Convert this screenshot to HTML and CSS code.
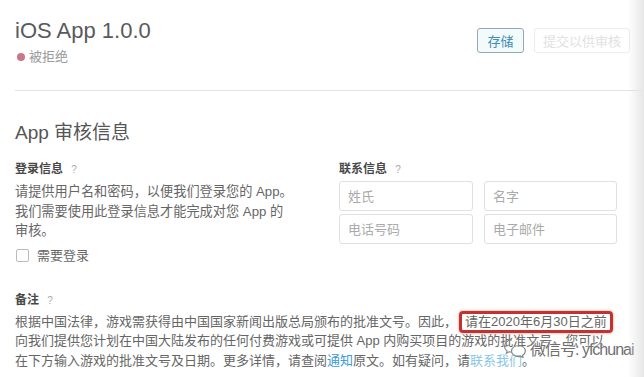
FILE: index.html
```html
<!DOCTYPE html>
<html>
  <head>
    <title>iOS App 1.0.0</title>
    <link rel="stylesheet" href="styles.css">
  </head>
  <body>
    <div class="page">
      <header class="head">
        <div class="head-info">
          <h1 class="title">iOS App 1.0.0</h1>
          <div class="status"><span class="dot"></span>被拒绝</div>
        </div>
        <div class="actions">
          <button class="btn btn-save">存储</button>
          <button class="btn btn-submit" disabled>提交以供审核</button>
        </div>
      </header>

      <section class="review">
        <h2 class="review-title">App 审核信息</h2>

        <div class="cols">
          <div class="login">
            <div class="label">登录信息 <span class="help">?</span></div>
            <p class="desc">请提供用户名和密码，以便我们登录您的 App。<br>我们需要使用此登录信息才能完成对您 App 的<br>审核。</p>
            <label class="check"><span class="box"></span>需要登录</label>
          </div>

          <div class="contact">
            <div class="label">联系信息 <span class="help">?</span></div>
            <div class="fields">
              <input class="field" placeholder="姓氏">
              <input class="field" placeholder="名字">
              <input class="field" placeholder="电话号码">
              <input class="field" placeholder="电子邮件">
            </div>
          </div>
        </div>

        <div class="notes">
          <div class="label">备注 <span class="help">?</span></div>
          <p class="notes-text">根据中国法律，游戏需获得由中国国家新闻出版总局颁布的批准文号。因此，<span class="mark">请在2020年6月30日之前</span><br>向我们提供您计划在中国大陆发布的任何付费游戏或可提供 App 内购买项目的游戏的批准文号。您可以<br>在下方输入游戏的批准文号及日期。更多详情，请查阅<a class="link" href="#">通知</a>原文。如有疑问，请<a class="link light" href="#">联系我们</a>。</p>
        </div>
      </section>

      <!-- 水印 -->
      <div class="watermark">
        <svg width="24" height="20" viewBox="0 0 24 20">
          <path d="M9 2C4.6 2 1.5 4.8 1.5 8.2c0 1.9 1 3.6 2.6 4.7l-.7 2.3 2.7-1.4c.9.3 1.9.4 2.9.4" fill="none" stroke="#888" stroke-width="1.2"/>
          <path d="M15.5 7.5c-3.900 0-7 2.5-7 5.6s3.1 5.6 7 5.6c.8 0 1.6-.1 2.3-.3l2.3 1.2-.6-2c1.4-1 2.9-2.700 2.9-4.5 0-3.1-3-5.6-6.9-5.6z" fill="none" stroke="#888" stroke-width="1.2"/>
        </svg>
        <span>微信号: yfchunai</span>
      </div>
      <div class="edge"></div>
    </div>
  </body>
</html>
```

FILE: styles.css
```css
body{
  margin: 0;
  background: #fff;
  font-family: "Liberation Sans", "Noto Sans CJK SC", sans-serif;
  color: #666;
}
.page{
  position: relative;
  width: 644px;
  height: 377px;
  overflow: hidden;
  padding-left: 15px;
  box-sizing: border-box;
}

/**** 顶部 ****/
.head{
  display: flex;
  justify-content: space-between;
  padding: 18px 14px 24px 0;
  border-bottom: 1px solid #e2e2e2;
}
.title{
  margin: 0;
  font-size: 22px;
  line-height: 26px;
  font-weight: normal;
  color: #5a5a5a;
}
.status{
  display: flex;
  align-items: center;
  margin-top: 4px;
  margin-left: 2px;
  font-size: 13px;
  line-height: 18px;
  color: #9a9a9a;
}
.dot{
  width: 8px;
  height: 8px;
  border-radius: 50%;
  background: #c9788a;
  margin-right: 4px;
}
.actions{
  display: flex;
  gap: 10px;
  margin-top: 10px;
  height: 25px;
}
.btn{
  font-family: inherit;
  font-size: 13px;
  border-radius: 3px;
  padding: 0;
  height: 25px;
  white-space: nowrap;
}
.btn-save{
  width: 47px;
  border: 1px solid #94a9b3;
  background: #f2fafb;
  color: #3e8fb2;
}
.btn-submit{
  width: 96px;
  border: 1px solid #ececec;
  background: #fff;
  color: #e2e2e2;
}

/**** 审核信息 ****/
.review-title{
  margin: 29px 0 0;
  font-size: 19px;
  line-height: 26px;
  font-weight: normal;
  color: #555;
}
.label{
  font-size: 12px;
  line-height: 18px;
  font-weight: bold;
  color: #484848;
}
.help{
  margin-left: 5px;
  font-size: 10px;
  font-weight: normal;
  color: #aaa;
}
.cols{
  display: grid;
  grid-template-columns: 324px 278px;
  margin-top: 14px;
}
.desc{
  margin: 3px 0 0;
  font-size: 13.2px;
  line-height: 19.5px;
  color: #666;
}
.check{
  display: flex;
  align-items: center;
  margin-top: 6px;
  font-size: 13px;
  line-height: 18px;
  color: #666;
}
.box{
  width: 11px;
  height: 11px;
  border: 1px solid #bbb;
  border-radius: 2px;
  margin: 0 8px 0 1px;
}
.fields{
  display: grid;
  grid-template-columns: 134px 133px;
  column-gap: 11px;
  row-gap: 3px;
  margin-top: 2px;
}
.field{
  height: 30px;
  box-sizing: border-box;
  border: 1px solid #e0e0e0;
  border-radius: 3px;
  padding: 0 8px;
  font-family: inherit;
  font-size: 13px;
  color: #666;
}
.field::placeholder{
  color: #aaa;
}

/**** 备注 ****/
.notes{
  margin-top: 26px;
}
.notes-text{
  margin: 2px 0 0;
  font-size: 13px;
  line-height: 19.7px;
  color: #666;
  white-space: nowrap;
}
.mark{
  display: inline-block;
  line-height: 16px;
  margin: -3px 0 -3px 2px;
  padding: 0 3px;
  border: 3px solid #c4322d;
  border-radius: 4px;
  box-shadow: 0 0 3px rgba(200,40,40,.5);
}
.link{
  color: #3d9bd6;
  text-decoration: none;
}
.link.light{
  color: #8cc7e8;
}

/**** 水印 ****/
.watermark{
  position: absolute;
  left: 503px;
  top: 336px;
  display: flex;
  align-items: center;
  gap: 3px;
  font-size: 16px;
  letter-spacing: -1px;
  color: #707070;
  text-shadow: 0 0 3px #fff, 0 0 3px #fff;
}
.edge{
  position: absolute;
  right: 0;
  top: 0;
  bottom: 0;
  width: 16px;
  background: linear-gradient(to right, rgba(232,232,232,0), #e6e6e6);
}
```
